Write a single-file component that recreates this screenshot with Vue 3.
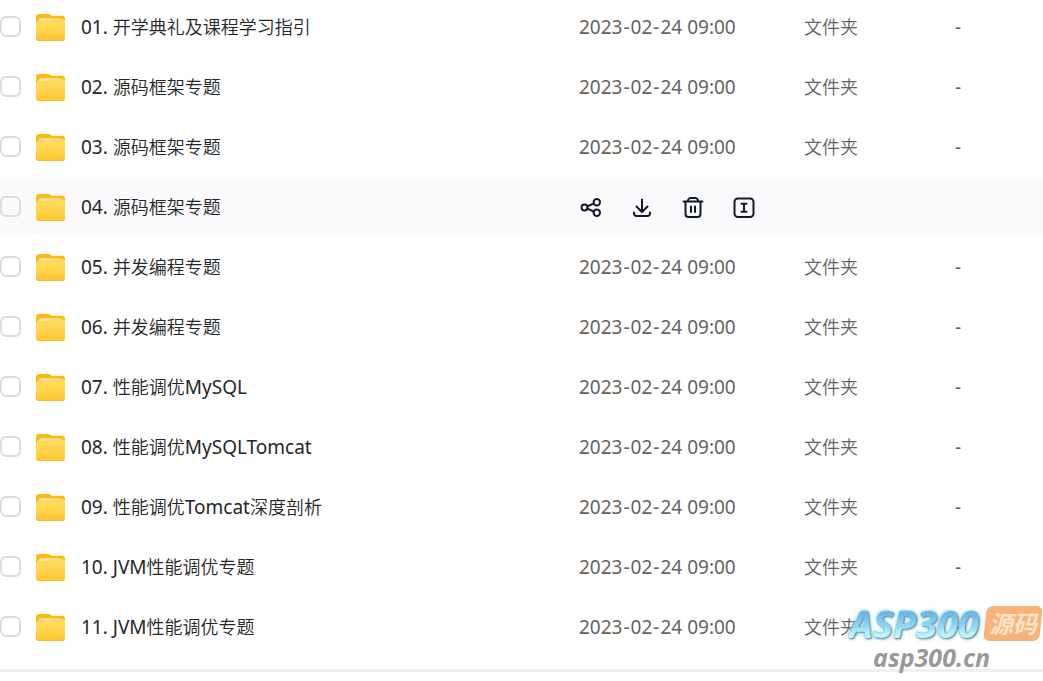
<script setup>
import { ref } from 'vue'

const names = [
  '01. 开学典礼及课程学习指引',
  '02. 源码框架专题',
  '03. 源码框架专题',
  '04. 源码框架专题',
  '05. 并发编程专题',
  '06. 并发编程专题',
  '07. 性能调优MySQL',
  '08. 性能调优MySQLTomcat',
  '09. 性能调优Tomcat深度剖析',
  '10. JVM性能调优专题',
  '11. JVM性能调优专题'
]

// Latin runs are set slightly larger than the Chinese text around them.
const split = (name) =>
  name.match(/[\x20-\x7e]+|[^\x20-\x7e]+/g).map((text) => ({ text, latin: text.charCodeAt(0) < 128 }))

const files = ref(names.map((name, i) => ({ id: i + 1, parts: split(name), checked: false })))
const activeId = ref(4)
</script>

<template>
  <main class="page">
    <svg class="defs" aria-hidden="true">
      <defs>
        <linearGradient id="folder-front" x1="0" y1="0" x2="0" y2="1">
          <stop offset="0" stop-color="#ffdc5e" />
          <stop offset="0.5" stop-color="#ffd44b" />
          <stop offset="1" stop-color="#ffc62e" />
        </linearGradient>
        <linearGradient id="folder-paper" x1="0" y1="0" x2="1" y2="0">
          <stop offset="0" stop-color="#ffefb8" />
          <stop offset="1" stop-color="#ffdf80" />
        </linearGradient>
      </defs>
    </svg>
    <table class="files">
      <colgroup>
        <col />
        <col class="col-date" />
        <col class="col-type" />
        <col class="col-size" />
      </colgroup>
      <tbody>
        <tr v-for="file in files" :key="file.id" :class="{ active: file.id === activeId }">
          <td>
            <label class="name">
              <input v-model="file.checked" type="checkbox" class="check" />
              <svg class="folder" viewBox="0 0 30 28" aria-hidden="true">
                <path d="M0 3a3 3 0 0 1 3-3h10c1 0 1.600.300 2.300 1l.9.800H27a3 3 0 0 1 3 3V13H0z" fill="#ffb916" />
                <path d="M3 7a2.500 2.500 0 0 1 2.500-2.500h19a2.500 2.500 0 0 1 2.500 2.500v6H3z" fill="url(#folder-paper)" />
                <path d="M0 9a2 2 0 0 1 2-2c9 0 16-.2 21-1.200 3-.6 7-.8 7 1.700v17.500a3 3 0 0 1-3 3H3a3 3 0 0 1-3-3z" fill="url(#folder-front)" />
                <path d="M0 24.500a3 3 0 0 0 3 2.600h24a3 3 0 0 0 3-2.600v.5a3 3 0 0 1-3 3H3a3 3 0 0 1-3-3z" fill="#ffbd22" />
              </svg>
              <span><span v-for="(part, i) in file.parts" :key="i" :class="{ latin: part.latin }">{{ part.text }}</span></span>
            </label>
          </td>
          <template v-if="file.id === activeId">
            <td colspan="3">
              <div class="actions">
                <button type="button" aria-label="分享">
                  <svg viewBox="0 0 24 24">
                    <circle cx="5.500" cy="12.500" r="3" /><circle cx="17.800" cy="7.300" r="3.200" /><circle cx="17.800" cy="17.700" r="3.200" />
                    <path d="M8.300 11.300l6.500-2.800M8.300 13.700l6.500 2.800" />
                  </svg>
                </button>
                <button type="button" aria-label="下载">
                  <svg viewBox="0 0 24 24">
                    <path d="M12 4.500v12M6.500 11.500l5.500 5.500 5.500-5.500M4 17.500v1a2.500 2.500 0 0 0 2.500 2.500h11a2.500 2.500 0 0 0 2.500-2.500v-1" />
                  </svg>
                </button>
                <button type="button" aria-label="删除">
                  <svg viewBox="0 0 24 24">
                    <path d="M2.500 6.500h19M4.500 6.500v12.500a3 3 0 0 0 3 3h9a3 3 0 0 0 3-3V6.500M6.500 6.500l.8-1.800A2.500 2.500 0 0 1 9.500 3h5a2.500 2.500 0 0 1 2.200 1.700l.8 1.800M10 11.500v5.500M14 11.500v5.500" />
                  </svg>
                </button>
                <button type="button" aria-label="重命名">
                  <svg viewBox="0 0 24 24">
                    <rect x="2.500" y="3.500" width="19" height="18.500" rx="3.500" />
                    <path d="M9.500 8.800h5M12 8.800v8M9.500 16.800h5" />
                  </svg>
                </button>
              </div>
            </td>
          </template>
          <template v-else>
            <td class="muted latin">2023<span class="dash">-</span>02<span class="dash">-</span>24 09:00</td>
            <td class="muted">文件夹</td>
            <td class="muted latin">-</td>
          </template>
        </tr>
      </tbody>
    </table>
    <hr class="rule" />
    <aside class="watermark">
      <div class="brand">
        <span class="logo">ASP300</span>
        <span class="tag">源码</span>
      </div>
      <div class="domain">asp300.cn</div>
    </aside>
  </main>
</template>

<style>
html,
body {
  background: #fff;
}
</style>

<style scoped>
.page {
  position: relative;
  overflow: hidden;
  color: #262626;
  font: 350 18px/24px "Noto Sans", "Noto Sans CJK SC", sans-serif;
}
.defs {
  position: absolute;
  width: 0;
  height: 0;
}
.files {
  width: 100%;
  margin-top: -3px;
  table-layout: fixed;
  border-collapse: separate;
  border-spacing: 0;
}
.col-date {
  width: 225px;
}
.col-type {
  width: 151px;
}
.col-size {
  width: 88px;
}
td {
  box-sizing: border-box;
  height: 60px;
  padding: 2px 0 0;
  border-bottom: 2px solid #fff;
  white-space: nowrap;
  vertical-align: middle;
}
.active td {
  background: #fafafc;
}
.name {
  display: flex;
  align-items: center;
}
.check {
  appearance: none;
  box-sizing: border-box;
  width: 21px;
  height: 21px;
  margin: 0 15px 2px 0;
  border: 2px solid #dcdcdc;
  border-radius: 6px;
  background: transparent;
}
.check:checked {
  border-color: #06a7ff;
  background: #06a7ff;
}
.folder {
  width: 29px;
  height: 27px;
  margin-right: 16px;
}
.latin {
  font-size: 19px;
  font-weight: 400;
}
.dash {
  margin: 0 1px;
}
.muted {
  color: #636363;
}
.actions {
  display: flex;
  gap: 27px;
}
button {
  display: block;
  padding: 0;
  border: 0;
  background: none;
  cursor: pointer;
}
button svg {
  display: block;
  width: 24px;
  height: 24px;
  fill: none;
  stroke: #10182b;
  stroke-width: 2;
  stroke-linecap: round;
  stroke-linejoin: round;
}
.rule {
  height: 3px;
  margin: 12px 0 9px;
  border: 0;
  background: #f0f0f0;
}
.watermark {
  position: absolute;
  right: 0;
  bottom: 8px;
  font-style: italic;
  font-weight: 700;
  pointer-events: none;
}
.brand {
  display: flex;
  align-items: center;
  gap: 4px;
}
.logo {
  color: transparent;
  background: linear-gradient(#58b2ea 25%, #80d8f8 60%, #b4f4fc 80%);
  background-clip: text;
  font-family: "Open Sans", sans-serif;
  font-size: 38px;
  line-height: 36px;
  filter: drop-shadow(0 0 1px #7d98a8) drop-shadow(1px 1px 0 #858b91) drop-shadow(0 0 2px #9eeef8);
  opacity: 0.9;
}
.tag {
  position: relative;
  z-index: 0;
  width: 60px;
  color: #fde2cb;
  font-size: 24px;
  line-height: 35px;
  text-align: center;
}
.tag::before {
  content: "";
  position: absolute;
  inset: 0 2px;
  z-index: -1;
  border-radius: 6px;
  background: #fab27b;
  transform: skewX(-6deg);
}
.domain {
  padding-left: 24px;
  color: #999;
  font-family: "Open Sans", sans-serif;
  font-size: 25px;
  line-height: 32px;
}
</style>
